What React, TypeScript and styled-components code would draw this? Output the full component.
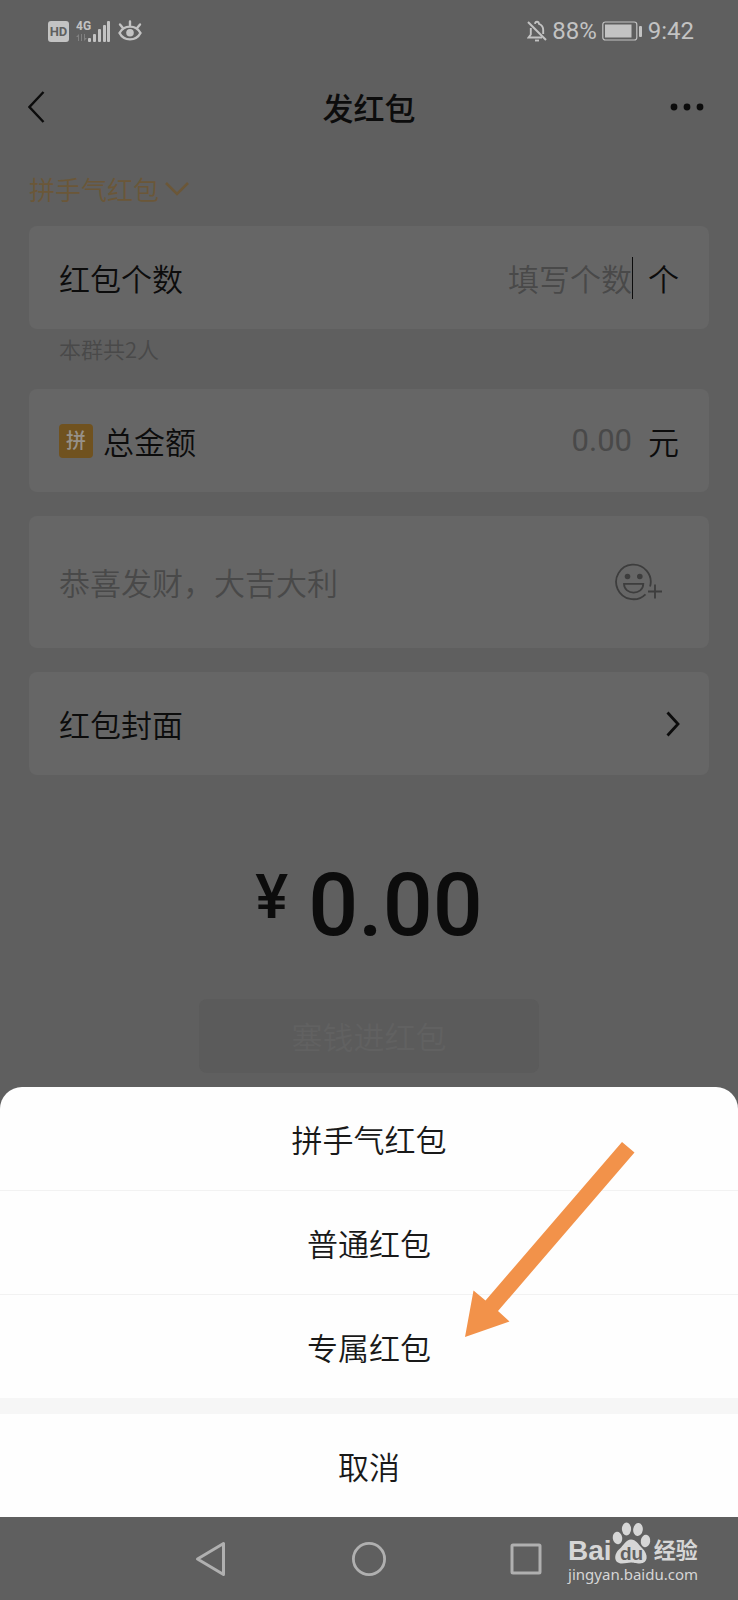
import React from "react";
import styled, { createGlobalStyle } from "styled-components";

const color = {
  page: "#5f5f5f",
  card: "#666666",
  ink: "#0c0c0c",
  faint: "#494949",
  gold: "#6b5738",
  status: "#c3c3c3",
  nav: "#b0b0b0",
  mark: "#d6d6d6",
};

const latin = `Roboto, "Noto Sans CJK SC", sans-serif`;

const GlobalStyle = createGlobalStyle`
  * { box-sizing: border-box; }
  body {
    margin: 0;
    background: ${color.page};
    font-family: "Noto Sans CJK SC", sans-serif;
    font-weight: 350;
    color: ${color.ink};
  }
  button, input {
    font: inherit;
    color: inherit;
    background: none;
    border: 0;
    padding: 0;
    margin: 0;
  }
  svg { display: block; flex: none; }
`;

const Page = styled.div`
  min-height: 100vh;
  display: flex;
  flex-direction: column;
`;

const StatusBar = styled.div`
  height: 62px;
  padding: 0 44px 0 48px;
  display: flex;
  align-items: center;
  justify-content: space-between;
  color: ${color.status};
  font-family: ${latin};
  font-size: 24px;
  font-weight: 400;
`;

const StatusGroup = styled.div<{ $gap: number }>`
  display: flex;
  align-items: center;
  gap: ${(p) => p.$gap}px;
`;

const HdTag = styled.span`
  width: 21px;
  height: 21px;
  border-radius: 3px;
  background: ${color.status};
  color: ${color.page};
  font-size: 13px;
  font-weight: 700;
  line-height: 21px;
  text-align: center;
`;

const Header = styled.header`
  height: 90px;
  padding: 0 28px;
  display: grid;
  grid-template-columns: 1fr auto 1fr;
  align-items: center;
`;

const Title = styled.h1`
  margin: 0;
  font-size: 31px;
  line-height: 40px;
  font-weight: 500;
`;

const IconButton = styled.button<{ $end?: boolean }>`
  justify-self: ${(p) => (p.$end ? "end" : "start")};
`;

const Form = styled.form`
  padding: 0 29px;
  display: flex;
  flex-direction: column;
`;

const TypeButton = styled.button`
  height: 74px;
  align-self: flex-start;
  display: flex;
  align-items: center;
  gap: 6px;
  font-size: 26px;
  line-height: 30px;
  color: ${color.gold};
`;

const Card = styled.div<{ $tall?: boolean; $spaced?: boolean }>`
  height: ${(p) => (p.$tall ? 132 : 103)}px;
  margin-bottom: ${(p) => (p.$spaced ? 24 : 0)}px;
  padding: 0 ${(p) => (p.$tall ? 46 : 30)}px 0 30px;
  border-radius: 8px;
  background: ${color.card};
  display: flex;
  align-items: center;
  font-size: 31px;
  line-height: 40px;
`;

const CoverButton = styled(Card).attrs({ as: "button", type: "button" })`
  width: 100%;
  background: ${color.card};
  padding: 0 29px 0 30px;
  justify-content: space-between;
`;

const FieldLabel = styled.label`
  display: flex;
  align-items: center;
  gap: 10px;
  white-space: nowrap;
`;

const Badge = styled.span`
  width: 34px;
  height: 34px;
  border-radius: 4px;
  background: #70521f;
  color: #96918a;
  font-size: 20px;
  line-height: 32px;
  font-weight: 500;
  text-align: center;
`;

const Field = styled.input<{ $end?: boolean; $number?: boolean }>`
  flex: 1;
  min-width: 0;
  height: 40px;
  line-height: 40px;
  text-align: ${(p) => (p.$end ? "right" : "left")};
  ${(p) => p.$number && `font-family: ${latin}; font-weight: 400;`}
  outline: none;
  &::placeholder {
    color: ${color.faint};
    opacity: 1;
  }
`;

const Caret = styled.span<{ $on?: boolean }>`
  width: 1px;
  height: 42px;
  background: ${(p) => (p.$on ? color.ink : "transparent")};
`;

const Unit = styled.span`
  margin-left: 15px;
`;

const Hint = styled.p`
  margin: 0;
  height: 60px;
  padding: 4px 30px 0;
  font-size: 22px;
  line-height: 30px;
  color: ${color.faint};
`;

const Total = styled.div`
  padding: 85px 0 49px;
  display: flex;
  justify-content: center;
  gap: 20px;
  font-family: ${latin};
  font-size: 88px;
  line-height: 90px;
  font-weight: 500;
`;

const Currency = styled.span`
  font-size: 62px;
  line-height: 74px;
`;

const Submit = styled.button`
  align-self: center;
  width: 340px;
  height: 74px;
  margin-bottom: 14px;
  border-radius: 8px;
  background: #5b5b5b;
  color: #616161;
  font-size: 31px;
  line-height: 40px;
`;

const Sheet = styled.section`
  position: relative;
  margin-top: auto;
  border-radius: 22px 22px 0 0;
  background: #fefefe;
  color: #191919;
  display: flex;
  flex-direction: column;
`;

const SheetItem = styled.button`
  height: 103px;
  font-size: 31px;
  line-height: 40px;
  & + & {
    height: 104px;
    border-top: 1px solid #f2f2f2;
  }
`;

const SheetGap = styled.div`
  height: 16px;
  background: #f6f6f6;
`;

const Arrow = styled.svg`
  position: absolute;
  left: calc(50% + 95px);
  top: 55px;
  pointer-events: none;
`;

const NavBar = styled.nav`
  position: relative;
  height: 83px;
  display: flex;
  align-items: center;
  justify-content: center;
  gap: 121px;
`;

const Watermark = styled.div`
  position: absolute;
  right: 40px;
  bottom: 16px;
  color: ${color.mark};
`;

const Brand = styled.div`
  display: flex;
  align-items: flex-end;
  font-family: "Liberation Sans", "Noto Sans CJK SC", sans-serif;
  font-weight: 700;
  font-size: 28px;
  line-height: 26px;
`;

const BrandCn = styled.span`
  margin-left: 2px;
  font-size: 22px;
`;

const Site = styled.div`
  font-family: "Noto Sans", sans-serif;
  font-weight: 400;
  font-size: 15px;
  line-height: 20px;
`;

const Signal = () => (
  <svg width="35" height="24" viewBox="0 0 35 24" fill={color.status}>
    <text x="0" y="11" fontSize="12" fontWeight="700" fontFamily="Roboto, sans-serif">4G</text>
    <g opacity="0.35">
      <path d="M3 22V15L0 18h2v4zM5 15v7h1v-7zM8 15v7l3-3H9v-4z" />
    </g>
    <rect x="12" y="19" width="3" height="4" rx="1" />
    <rect x="17" y="15" width="3" height="8" rx="1" />
    <rect x="22" y="10" width="3" height="13" rx="1" />
    <rect x="27" y="6" width="3" height="17" rx="1" />
    <rect x="31" y="2" width="3" height="21" rx="1" />
  </svg>
);

const Eye = () => (
  <svg width="24" height="22" viewBox="0 0 24 22" fill="none" stroke={color.status} strokeWidth="2.4" strokeLinecap="round">
    <path d="M1.5 13C6 4.500 18 4.500 22.500 13C18 21.500 6 21.500 1.500 13Z" />
    <circle cx="12" cy="12.700" r="3.800" fill={color.status} stroke="none" />
    <path d="M12 1.500V5M2 4.500L4.500 7.500M22 4.500L19.500 7.500" />
  </svg>
);

const BellOff = () => (
  <svg width="20" height="22" viewBox="0 0 20 22" fill="none" stroke={color.status} strokeWidth="1.900">
    <path d="M1 2L19 20" />
    <path d="M3.800 8V14.500L1.500 17.500H15M8 3.800C8.300 1 11.700 1 12 3.800C15 5 16.200 7 16.200 10V14" />
    <path d="M8 20.500H12" />
  </svg>
);

const Battery = () => (
  <svg width="41" height="20" viewBox="0 0 41 20">
    <rect x="0.800" y="1" width="34" height="18" rx="2.500" fill="none" stroke={color.status} strokeWidth="1.200" />
    <rect x="3" y="3.500" width="26.500" height="13" fill={color.status} />
    <rect x="37" y="5" width="3" height="11" rx="1" fill={color.status} />
  </svg>
);

const Smile = () => (
  <svg width="48" height="38" viewBox="0 0 48 38" fill="none" stroke="#3d3d3d" strokeWidth="1.800">
    <path d="M35.100 23.500A17.300 17.300 0 1 0 30.500 31.300" />
    <circle cx="12.500" cy="13.500" r="2.800" fill="#3d3d3d" stroke="none" />
    <circle cx="24.800" cy="13.500" r="2.800" fill="#3d3d3d" stroke="none" />
    <path d="M9 20.800H28.300C28.300 32.500 9 32.500 9 20.800Z" />
    <path d="M40 21.500V35.500M33 28.500H47" />
  </svg>
);

const Paw = () => (
  <svg width="40" height="42" viewBox="0 0 40 42" fill={color.mark}>
    <ellipse cx="5.500" cy="16" rx="4.700" ry="6.200" transform="rotate(-8 5.500 16)" />
    <ellipse cx="14.500" cy="7" rx="4.600" ry="6.500" />
    <ellipse cx="26" cy="7.500" rx="4.800" ry="6.500" transform="rotate(8 26 7.500)" />
    <ellipse cx="33.500" cy="19" rx="4.700" ry="6.200" transform="rotate(8 33.500 19)" />
    <path d="M19 17.500C24 17.500 26 22 30 26C37 32.500 36 41.500 28 41.500C23 41.500 22 40.500 19 40.500C16 40.500 14 41.500 10 41.500C1.500 41.500 1.500 32 7.500 27C12 23 14 17.500 19 17.500Z" />
    <text x="19.500" y="38" fontSize="19" fontWeight="700" textAnchor="middle" fill={color.page} fontFamily="Liberation Sans, sans-serif">du</text>
  </svg>
);

const sheetItems = ["拼手气红包", "普通红包", "专属红包"];

export default function App() {
  return (
    <Page>
      <GlobalStyle />
      <StatusBar>
        <StatusGroup $gap={7}>
          <HdTag>HD</HdTag>
          <Signal />
          <Eye />
        </StatusGroup>
        <StatusGroup $gap={5}>
          <BellOff />
          <span>88%</span>
          <Battery />
          <span>9:42</span>
        </StatusGroup>
      </StatusBar>

      <Header>
        <IconButton type="button" aria-label="返回">
          <svg width="17" height="32" viewBox="0 0 17 32" fill="none" stroke={color.ink} strokeWidth="2.400">
            <path d="M15.500 1L1.500 16L15.500 31" />
          </svg>
        </IconButton>
        <Title>发红包</Title>
        <IconButton type="button" aria-label="更多" $end>
          <svg width="40" height="8" viewBox="0 0 40 8" fill={color.ink}>
            <circle cx="4" cy="4" r="3.400" />
            <circle cx="17" cy="4" r="3.400" />
            <circle cx="30" cy="4" r="3.400" />
          </svg>
        </IconButton>
      </Header>

      <Form onSubmit={(e) => e.preventDefault()}>
        <TypeButton type="button">
          拼手气红包
          <svg width="24" height="14" viewBox="0 0 24 14" fill="none" stroke={color.gold} strokeWidth="2.600">
            <path d="M1 1L12 12L23 1" />
          </svg>
        </TypeButton>

        <Card>
          <FieldLabel htmlFor="count">红包个数</FieldLabel>
          <Field id="count" placeholder="填写个数" $end />
          <Caret $on />
          <Unit>个</Unit>
        </Card>
        <Hint>本群共2人</Hint>

        <Card $spaced>
          <FieldLabel htmlFor="amount">
            <Badge>拼</Badge>
            总金额
          </FieldLabel>
          <Field id="amount" placeholder="0.00" $end $number />
          <Caret />
          <Unit>元</Unit>
        </Card>

        <Card $tall $spaced>
          <Field aria-label="祝福语" placeholder="恭喜发财，大吉大利" />
          <IconButton type="button" aria-label="添加表情">
            <Smile />
          </IconButton>
        </Card>

        <CoverButton>
          红包封面
          <svg width="14" height="26" viewBox="0 0 14 26" fill="none" stroke={color.ink} strokeWidth="2.800">
            <path d="M1.500 1.500L12 13L1.500 24.500" />
          </svg>
        </CoverButton>

        <Total>
          <Currency>¥</Currency>
          <span>0.00</span>
        </Total>
        <Submit type="submit" disabled>
          塞钱进红包
        </Submit>
      </Form>

      <Sheet>
        {sheetItems.map((name) => (
          <SheetItem key={name} type="button">
            {name}
          </SheetItem>
        ))}
        <SheetGap />
        <SheetItem type="button">取消</SheetItem>
        <Arrow width="171" height="196" viewBox="0 0 171 196" fill="#f2924a">
          <path d="M158 0L170.500 10.500L34 169L45.500 179.500L1 195L9.500 148.500L21.500 158.500Z" />
        </Arrow>
      </Sheet>

      <NavBar>
        <IconButton type="button" aria-label="后退">
          <svg width="36" height="36" viewBox="0 0 36 36" fill="none" stroke={color.nav} strokeWidth="3" strokeLinejoin="round">
            <path d="M29.500 2.500V33.500L3.500 18Z" />
          </svg>
        </IconButton>
        <IconButton type="button" aria-label="主屏幕">
          <svg width="36" height="36" viewBox="0 0 36 36" fill="none" stroke={color.nav} strokeWidth="2.800">
            <circle cx="18" cy="18" r="15.600" />
          </svg>
        </IconButton>
        <IconButton type="button" aria-label="最近任务">
          <svg width="36" height="36" viewBox="0 0 36 36" fill="none" stroke={color.nav} strokeWidth="3">
            <rect x="4" y="4" width="28" height="28" rx="1" />
          </svg>
        </IconButton>
        <Watermark>
          <Brand>
            <span>Bai</span>
            <Paw />
            <BrandCn>经验</BrandCn>
          </Brand>
          <Site>jingyan.baidu.com</Site>
        </Watermark>
      </NavBar>
    </Page>
  );
}
